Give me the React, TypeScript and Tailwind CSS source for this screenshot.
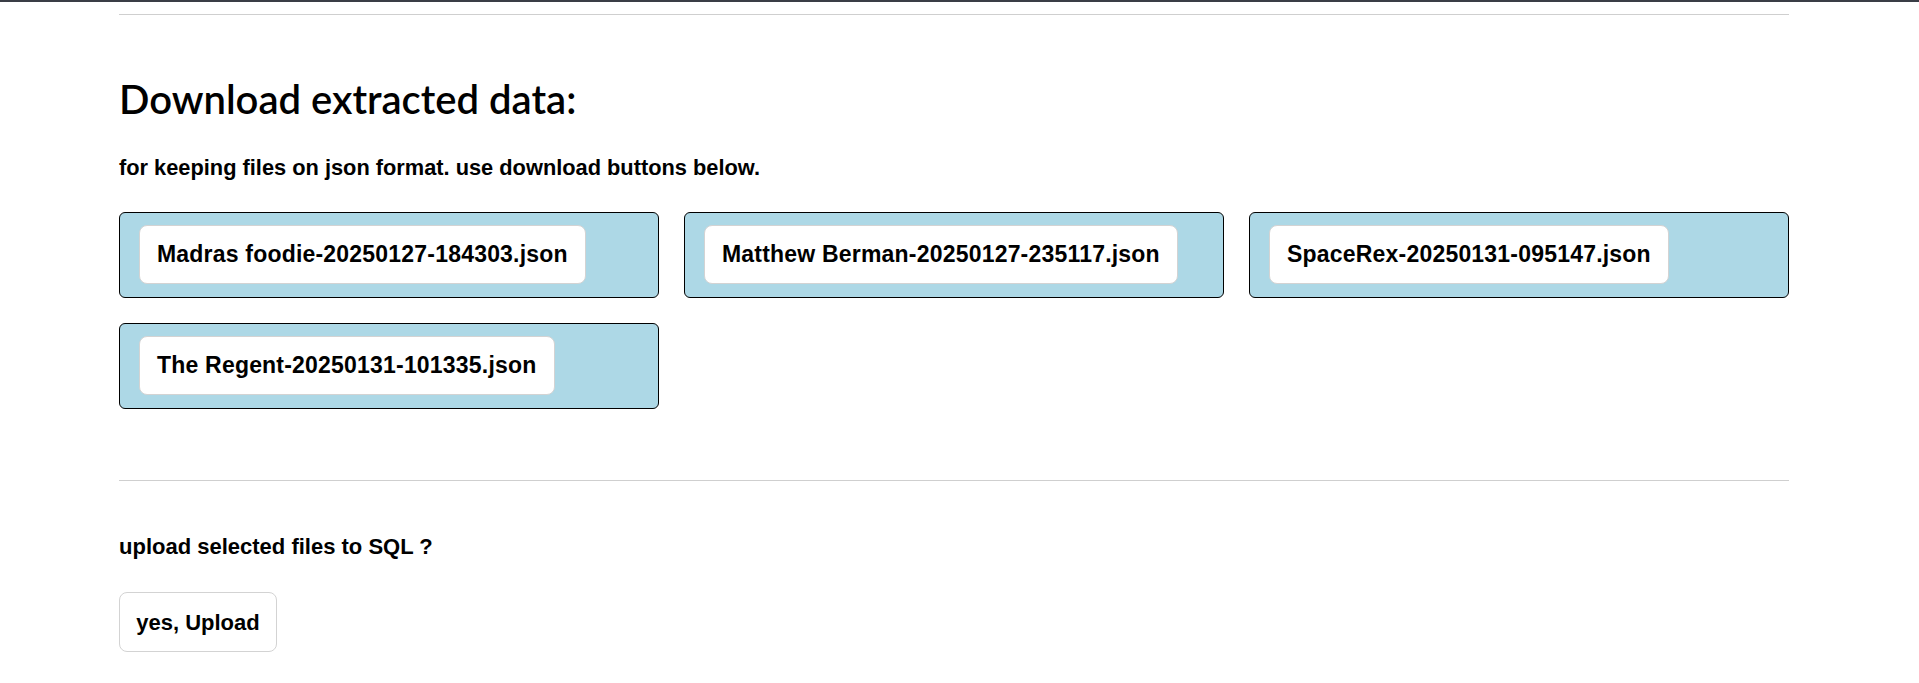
import { useState } from 'react';

const files = [
  'Madras foodie-20250127-184303.json',
  'Matthew Berman-20250127-235117.json',
  'SpaceRex-20250131-095147.json',
  'The Regent-20250131-101335.json',
];

const body = "font-['Liberation_Sans',Arial,sans-serif]";

function FileBox({ name }: { name: string }) {
  return (
    <div className="flex h-[86px] items-start rounded-[6px] border border-black bg-[#add8e6] pl-[19px] pt-[12px]">
      <button
        className={`flex h-[59px] items-center rounded-[8px] border border-[#d3d3d3] bg-white px-[17px] text-[23px] font-bold tracking-[0.2px] text-black ${body}`}
      >
        {name}
      </button>
    </div>
  );
}

function App() {
  const [uploaded, setUploaded] = useState(false);

  return (
    <div className="min-h-screen bg-white text-black">
      <div className="h-[2px] w-full bg-[#3a3d46]" />

      <div className="w-[1670px] ml-[119px]">
        <hr className="mt-[12px] border-0 border-t border-[#cfcfcf]" />

        <h2 className="mt-[60px] font-['Lato',sans-serif] text-[40px] font-semibold leading-[1.2]">
          Download extracted data:
        </h2>

        <p className={`mt-[28px] text-[21.8px] font-bold leading-[33px] ${body}`}>
          for keeping files on json format. use download buttons below.
        </p>

        <div className="mt-[28px] grid grid-cols-3 gap-[25px]">
          {files.map((f) => (
            <FileBox key={f} name={f} />
          ))}
        </div>

        <hr className="mt-[71px] border-0 border-t border-[#cfcfcf]" />

        <p className={`mt-[49px] text-[22px] font-bold leading-[33px] ${body}`}>
          upload selected files to SQL ?
        </p>

        <button
          onClick={() => setUploaded(!uploaded)}
          className={`mt-[29px] flex h-[60px] w-[158px] items-center justify-center rounded-[8px] border border-[#d3d3d3] bg-white text-[22px] font-bold ${body}`}
        >
          yes, Upload
        </button>
      </div>
    </div>
  );
}

export default App;
